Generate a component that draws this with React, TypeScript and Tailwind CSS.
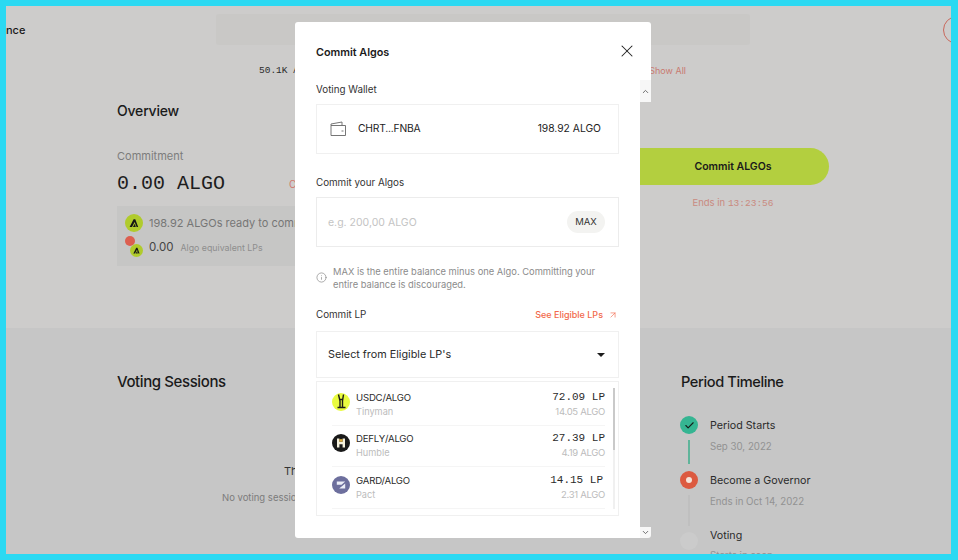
import React from 'react';
import { ChevronDown, ChevronUp, Check, Info, ArrowUpRight, X } from 'lucide-react';

const sans = "font-['Inter','Noto_Sans',sans-serif]";
const mono = "font-['Liberation_Mono','DejaVu_Sans_Mono',monospace]";

const AlgoMark: React.FC<{ size: number; className?: string }> = ({ size, className }) => (
  <svg width={size} height={size} viewBox="0 0 18 18" className={className}>
    <circle cx="9" cy="9" r="9" fill="#b0cb2c" />
    <path d="M4.6 13 8.6 5.2h1.7l2.9 7.8h-1.6L9.6 8 7 13zM7.9 13l1.9-3.2 1 3.2z" fill="#161616" />
  </svg>
);

const TinymanIcon = () => (
  <svg width="18" height="18" viewBox="0 0 18 18">
    <circle cx="9" cy="9" r="9" fill="#e9fb3f" />
    <path d="M6.5 1.5 8 8v6M11.5 1.5 10.5 8v6M5.5 14.5h8M8 6.5h2.5" fill="none" stroke="#1c1c16" strokeWidth="1.4" />
  </svg>
);

const HumbleIcon = () => (
  <svg width="18" height="18" viewBox="0 0 18 18">
    <circle cx="9" cy="9" r="9" fill="#191919" />
    <path d="M5 4.5h2.4v3.2h3.2V4.5H13v9h-2.4v-3.3H7.4v3.3H5z" fill="#f4f0dc" />
    <rect x="7.4" y="5.2" width="3.2" height="2.5" fill="#e3b341" />
  </svg>
);

const PactIcon = () => (
  <svg width="18" height="18" viewBox="0 0 18 18">
    <circle cx="9" cy="9" r="9" fill="#6d6f9d" />
    <path d="M4.8 5.5h8.4L9.5 8.8H4.8zM13.2 7.5v5H7.2z" fill="#eceef8" />
  </svg>
);

const lpRows = [
  { pair: 'USDC/ALGO', dex: 'Tinyman', lp: '72.09 LP', algo: '14.05 ALGO', icon: <TinymanIcon />, shift: '' },
  { pair: 'DEFLY/ALGO', dex: 'Humble', lp: '27.39 LP', algo: '4.19 ALGO', icon: <HumbleIcon />, shift: '' },
  { pair: 'GARD/ALGO', dex: 'Pact', lp: '14.15 LP', algo: '2.31 ALGO', icon: <PactIcon />, shift: 'mr-[2px]' },
];

const Timeline = () => (
  <div className="flex flex-col">
    <h2 className="text-[14.6px] leading-5 font-medium text-[#1a1a1a] tracking-[-0.4px]">Period Timeline</h2>
    <div className="mt-[24px] -ml-[1px] flex gap-3">
      <div className="flex flex-col items-center w-[18px]">
        <div className="w-[18px] h-[18px] rounded-full bg-[#35b592] flex items-center justify-center">
          <Check size={11} strokeWidth={2.5} className="text-[#14201c]" />
        </div>
        <div className="w-[2px] h-[24px] mt-[6px] bg-[#5fb49a]" />
        <div className="w-[18px] h-[18px] mt-[7px] rounded-full bg-[#dc5a40] flex items-center justify-center">
          <div className="w-[6px] h-[6px] rounded-full bg-[#f6e3d8]" />
        </div>
        <div className="w-[2px] h-[31px] bg-[#bfbfbf] mt-[6px]" />
        <div className="w-[18px] h-[18px] mt-[6px] rounded-full bg-[#cbcbcb]" />
      </div>
      <div className="flex flex-col text-[10.7px] leading-4 text-[#2b2b2b]">
        <span className="mt-[2px]">Period Starts</span>
        <span className="mt-[5px] text-[9.7px] text-[#929292]">Sep 30, 2022</span>
        <span className="mt-[18px]">Become a Governor</span>
        <span className="mt-[5px] text-[9.7px] text-[#929292]">Ends in Oct 14, 2022</span>
        <span className="mt-[18px]">Voting</span>
        <span className="mt-[4px] text-[9.7px] text-[#929292]">Starts in soon</span>
      </div>
    </div>
  </div>
);

const Modal = () => (
  <div className="absolute left-[289px] top-[16px] w-[356px] h-[516px] flex flex-col rounded-[3px] overflow-hidden">
    <div className="h-[58px] shrink-0 bg-white flex items-center justify-between pl-[21px] pr-[14px]">
      <h1 className="text-[10.8px] font-semibold text-[#1b1b1b] mt-[4px]">Commit Algos</h1>
      <X size={20} strokeWidth={1.25} className="text-[#222]" />
    </div>
    <div className="flex-1 flex min-h-0">
      <div className="w-[345px] bg-white px-[21px] flex flex-col">
        <label className="text-[9.8px] leading-4 text-[#333] mt-[2px]">Voting Wallet</label>
        <div className="mt-[6px] h-[50px] border border-[#f0f0f0] flex items-center justify-between pl-[13px] pr-[17px] text-[#222]">
          <div className="flex items-center gap-[12px]">
            <svg width="16" height="16" viewBox="0 0 16 16" fill="none" stroke="#666" strokeWidth="0.9">
              <path d="M1 4.5V14.5H15.5V4.5H1V3L12 1V4.5M11.5 10h2" />
            </svg>
            <span className="text-[10.3px] tracking-[-0.2px]">CHRT...FNBA</span>
          </div>
          <span className="text-[10.3px]">198.92 ALGO</span>
        </div>
        <label className="text-[9.8px] leading-4 text-[#333] mt-[21px]">Commit your Algos</label>
        <div className="mt-[6px] h-[50px] border border-[#ececec] flex items-center justify-between pl-[11px] pr-[13px]">
          <span className="text-[10.5px] text-[#c4c4c4] mt-[1px]">e.g. 200,00 ALGO</span>
          <span className="w-[38px] h-[22px] rounded-full bg-[#f3f3f1] flex items-center justify-center text-[9.5px] text-[#333]">MAX</span>
        </div>
        <div className="mt-[18px] flex gap-[6px] text-[#8b8b8b]">
          <Info size={11} strokeWidth={1.5} className="mt-[7px] shrink-0 text-[#888]" />
          <p className="text-[9.35px] leading-[13px]">MAX is the entire balance minus one Algo. Committing your entire balance is discouraged.</p>
        </div>
        <div className="mt-[16px] flex items-center justify-between">
          <label className="text-[9.8px] leading-4 text-[#333]">Commit LP</label>
          <a className="flex items-center gap-[5px] text-[9px] font-medium text-[#f2694c] pr-[1px]">
            See Eligible LPs
            <ArrowUpRight size={10} strokeWidth={1.5} />
          </a>
        </div>
        <div className="mt-[8px] h-[47px] border border-[#f0f0f0] flex items-center justify-between pl-[11px] pr-[13px]">
          <span className="text-[10.8px] text-[#2a2a2a] mt-[1px]">Select from Eligible LP's</span>
          <span className="w-0 h-0 border-x-[4px] border-x-transparent border-t-[4px] border-t-[#1c1c1c]" />
        </div>
        <div className="relative mt-[3px] h-[135px] border border-[#f0f0f0] pl-[15px] pr-[13px] pt-[2px]">
          {lpRows.map((row) => (
            <div key={row.pair} className="h-[41.5px] flex items-center border-b border-[#f5f5f5]">
              <div className="shrink-0 -mt-[5px]">{row.icon}</div>
              <div className="ml-[6px] flex flex-col">
                <span className="text-[9.6px] leading-[15px] text-[#2b2b2b] tracking-[-0.2px]">{row.pair}</span>
                <span className="text-[9.2px] leading-[14px] text-[#bcbcbc]">{row.dex}</span>
              </div>
              <div className="ml-auto flex flex-col items-end">
                <span className={`text-[11px] leading-[15px] text-[#2b2b2b] ${mono} ${row.shift}`}>{row.lp}</span>
                <span className="text-[9.5px] leading-[14px] text-[#bcbcbc] tracking-[-0.3px]">{row.algo}</span>
              </div>
            </div>
          ))}
          <div className="absolute right-[3px] top-[6px] bottom-[6px] w-[2px] bg-[#f0f0f0]">
            <div className="h-[62px] bg-[#c9c9c9]" />
          </div>
        </div>
      </div>
      <div className="w-[11px] flex flex-col justify-between">
        <div className="h-[22px] bg-[#f7f7f7] flex items-center justify-center">
          <ChevronUp size={9} strokeWidth={2.5} className="text-[#666]" />
        </div>
        <div className="h-[11px] bg-[#f7f7f7] flex items-center justify-center">
          <ChevronDown size={9} strokeWidth={2.5} className="text-[#666]" />
        </div>
      </div>
    </div>
  </div>
);

export default function App() {
  return (
    <div className={`w-[958px] h-[560px] bg-[#2bd9f2] pl-[6px] pt-[6px] pr-[7px] pb-[6px] ${sans}`}>
      <div className="relative w-full h-full overflow-hidden flex flex-col bg-[#cdcccb]">
        <section className="h-[322px] shrink-0 flex flex-col">
          <header className="h-[48px] shrink-0 flex items-center">
            <span className="w-[19px] shrink-0 text-[11px] font-medium text-[#1a1a1a]">nce</span>
            <div className="ml-[191px] mt-[-1px] w-[534px] h-[31px] rounded-[3px] bg-[#c9c8c6]" />
            <div className="ml-auto w-[28px] h-[28px] shrink-0 rounded-full border border-[#c9685c] mr-[-20px]" />
          </header>
          <div className="ml-[253px] flex items-center mt-[10px] w-[427px] justify-between">
            <span className={`text-[9.5px] text-[#2a2a2a] ${mono}`}>50.1K ALGO</span>
            <span className="text-[9px] text-[#c97a70]">Show All</span>
          </div>
          <div className="flex ml-[111px] mt-[23px]">
            <div className="w-[520px] shrink-0 flex flex-col">
              <h2 className="text-[14px] leading-5 font-medium text-[#1a1a1a] tracking-[-0.2px]">Overview</h2>
              <span className="mt-[27px] text-[11px] leading-4 text-[#7c7c7c]">Commitment</span>
              <div className="mt-[8px] flex items-center w-[250px]">
                <span className={`text-[20px] leading-6 text-[#1d1d1d] ${mono}`}>0.00 ALGO</span>
                <span className="ml-[64px] text-[10px] text-[#d07a6e]">Cancel</span>
              </div>
              <div className="mt-[10px] w-[300px] h-[60px] bg-[#c6c6c5] pl-[8px] pb-[2px] flex flex-col justify-center gap-[6px]">
                <div className="flex items-center gap-[6px]">
                  <AlgoMark size={18} />
                  <span className="text-[11px] text-[#767676]">198.92 ALGOs ready to commit</span>
                </div>
                <div className="flex items-center gap-[6px]">
                  <div className="relative w-[18px] h-[18px]">
                    <div className="absolute left-0 top-[-2px] w-[10px] h-[10px] rounded-full bg-[#dc5f50]" />
                    <AlgoMark size={13} className="absolute right-0 bottom-[-1px]" />
                  </div>
                  <span className="text-[11.5px] text-[#444]">0.00</span>
                  <span className="text-[8.8px] ml-[1px] text-[#8e8e8e]">Algo equivalent LPs</span>
                </div>
              </div>
            </div>
            <div className="flex flex-col items-center mt-[47px]">
              <div className="w-[192px] h-[37px] rounded-r-full bg-[#b3cf3f] flex items-center justify-center text-[10.5px] font-semibold text-[#1a1a1a]">
                Commit ALGOs
              </div>
              <span className="mt-[11px] text-[9.5px] text-[#c98a80]">
                Ends in <span className={mono}>13:23:56</span>
              </span>
            </div>
          </div>
        </section>
        <section className="flex-1 min-h-0 bg-[#c6c6c6] flex pt-[44px]">
          <div className="w-[675px] shrink-0 pl-[111px] flex flex-col">
            <h2 className="text-[15px] leading-5 font-medium text-[#1a1a1a] tracking-[-0.4px]">Voting Sessions</h2>
            <div className="mt-[71px] ml-[-27px] w-[560px] flex flex-col items-center text-center">
              <span className="text-[11px] text-[#333]">There are no voting sessions yet.</span>
              <span className="mt-[11px] text-[9.5px] text-[#7c7c7c]">No voting sessions are available for this governance period so far.</span>
            </div>
          </div>
          <Timeline />
        </section>
        <Modal />
      </div>
    </div>
  );
}
